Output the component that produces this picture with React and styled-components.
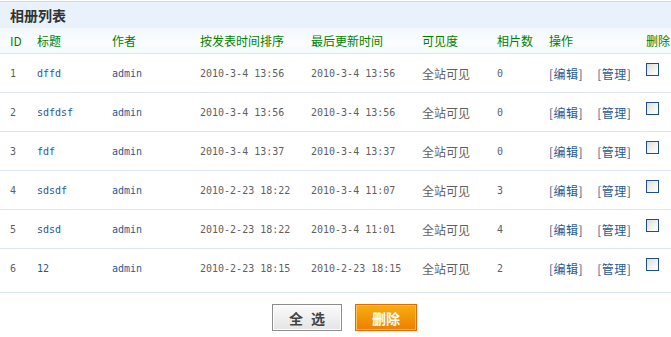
import React from 'react';
import styled, { createGlobalStyle } from 'styled-components';

const GlobalStyle = createGlobalStyle`
  html, body {
    margin: 0;
    padding: 0;
    background: #fff;
  }
  body {
    width: 671px;
    overflow: hidden;
    font-family: "Noto Sans CJK SC", sans-serif;
    font-size: 12px;
    color: #666;
  }
`;

const COLS = '27px 75px 88px 111px 111px 75px 52px 97px 40px';

const Page = styled.div`
  width: 671px;
  padding-top: 1px;
`;

const TitleBar = styled.div`
  height: 26px;
  border-top: 1px solid #c8d9ec;
  background: #e9f1fa;
  display: flex;
  align-items: center;
  padding-left: 10px;
  font-size: 14px;
  font-weight: bold;
  color: #333;
`;

const Row = styled.div`
  display: grid;
  grid-template-columns: ${COLS};
  padding-left: 10px;
  height: ${props => props.tall ? 43 : 38}px;
  border-bottom: 1px solid #dbe6f1;
  white-space: nowrap;
`;

const HeadRow = styled(Row)`
  height: 25px;
  align-items: center;
  background: linear-gradient(#f2f8fd, #fbfdff 60%, #f4f9fd);
  color: #008000;
`;

const Cell = styled.div`
  display: flex;
  align-items: flex-start;
  padding-top: 13px;
  line-height: 13px;
  font-family: ${props => props.mono ? '"DejaVu Sans Mono", monospace' : '"Noto Sans CJK SC", sans-serif'};
  font-size: ${props => props.mono ? '10px' : '12px'};
  color: ${props => props.link ? '#1f5a91' : '#5f5f5f'};
`;

const Link = styled.span`
  color: #1f5a91;
  margin-right: 14px;
  letter-spacing: 0.5px;
`;

const Check = styled.span`
  display: block;
  box-sizing: border-box;
  width: 13px;
  height: 13px;
  margin-top: -4px;
  border: 1px solid #1f4f85;
  background: linear-gradient(135deg, #dcdcd6, #f4f4f2 60%, #ffffff);
`;

const Footer = styled.div`
  display: flex;
  justify-content: center;
  gap: 13px;
  padding: 11px 0 0 18px;
`;

const Button = styled.button`
  box-sizing: border-box;
  height: 27px;
  width: ${props => props.primary ? '62px' : '70px'};
  padding: 0;
  font-family: "Noto Sans CJK SC", sans-serif;
  font-size: 14px;
  font-weight: bold;
  letter-spacing: ${props => props.primary ? '0' : '8px'};
  text-indent: ${props => props.primary ? '0' : '8px'};
  color: ${props => props.primary ? '#fff' : '#444'};
  border: 1px solid ${props => props.primary ? '#e26a00' : '#8c8c8c'};
  box-shadow: inset 0 0 0 1px ${props => props.primary ? '#fbc35a' : '#fff'};
  background: ${props =>
    props.primary
      ? 'linear-gradient(#f7ae0f, #ee7e02)'
      : 'linear-gradient(#fbfbfb, #e4e4e4)'};
`;

const albums = [
  { id: 1, title: 'dffd', made: '2010-3-4 13:56', updated: '2010-3-4 13:56', count: 0 },
  { id: 2, title: 'sdfdsf', made: '2010-3-4 13:56', updated: '2010-3-4 13:56', count: 0 },
  { id: 3, title: 'fdf', made: '2010-3-4 13:37', updated: '2010-3-4 13:37', count: 0 },
  { id: 4, title: 'sdsdf', made: '2010-2-23 18:22', updated: '2010-3-4 11:07', count: 3 },
  { id: 5, title: 'sdsd', made: '2010-2-23 18:22', updated: '2010-3-4 11:01', count: 4 },
  { id: 6, title: '12', made: '2010-2-23 18:15', updated: '2010-2-23 18:15', count: 2 }
];

const headers = ['ID', '标题', '作者', '按发表时间排序', '最后更新时间', '可见度', '相片数', '操作', '删除'];

const App = () => (
  <Page>
    <GlobalStyle />
    <TitleBar>相册列表</TitleBar>
    <HeadRow>
      {headers.map(h => (
        <div key={h}>{h}</div>
      ))}
    </HeadRow>
    {albums.map((a, i) => (
      <Row key={a.id} tall={i === albums.length - 1}>
        <Cell mono>{a.id}</Cell>
        <Cell mono link>{a.title}</Cell>
        <Cell mono link>admin</Cell>
        <Cell mono>{a.made}</Cell>
        <Cell mono>{a.updated}</Cell>
        <Cell>全站可见</Cell>
        <Cell mono>{a.count}</Cell>
        <Cell>
          <Link>[编辑]</Link>
          <Link>[管理]</Link>
        </Cell>
        <Cell>
          <Check />
        </Cell>
      </Row>
    ))}
    <Footer>
      <Button>全选</Button>
      <Button primary>删除</Button>
    </Footer>
  </Page>
);

export default App;
